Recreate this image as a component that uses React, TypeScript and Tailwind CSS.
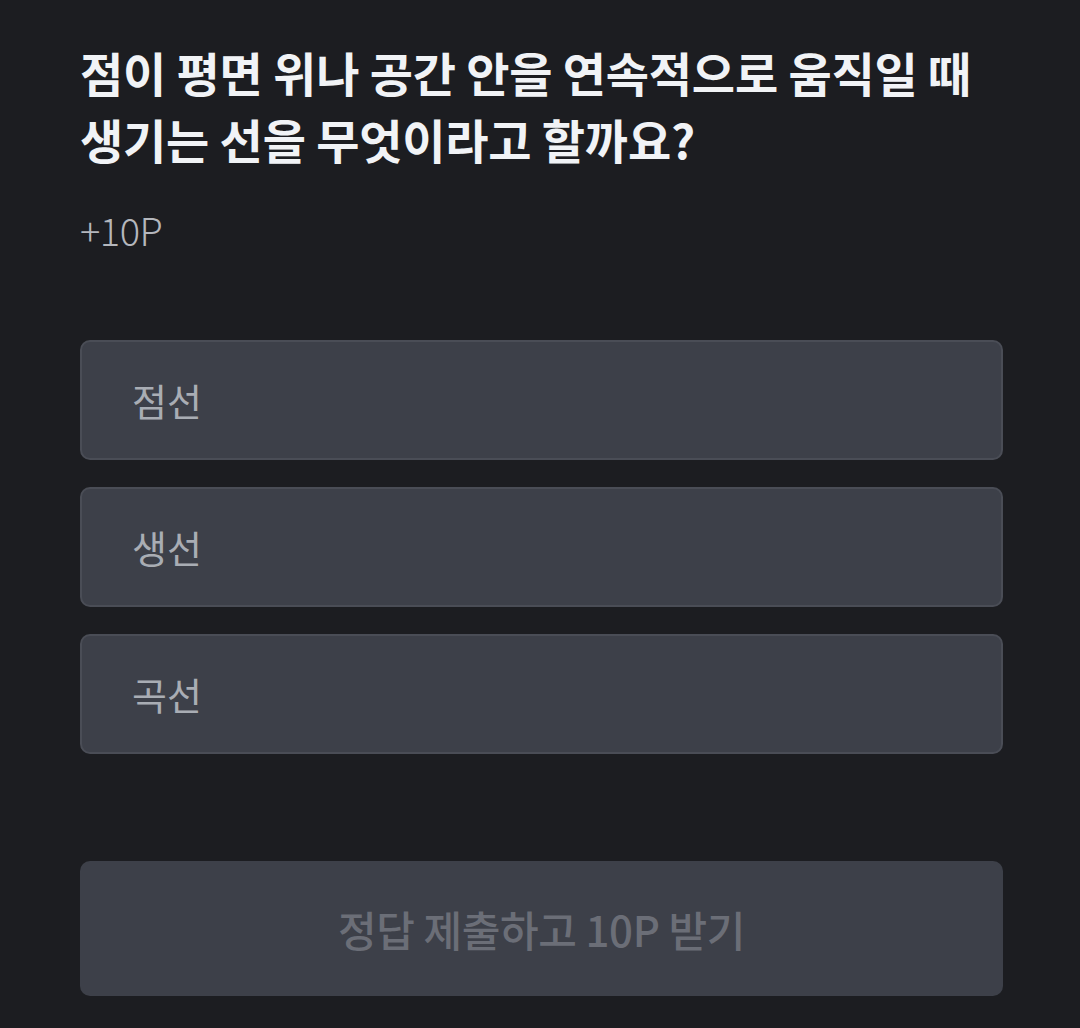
const OPTIONS = ['점선', '생선', '곡선']

export default function App() {
  return (
    <div
      className="min-h-[1028px] w-full bg-[#1c1d21] px-[80px] pt-[38px]"
      style={{ fontFamily: '"Noto Sans CJK KR", "Noto Sans", sans-serif' }}
    >
      <h1 className="text-[47px] font-bold leading-[67px] tracking-[-0.2px] text-[#f1f3f6]">
        점이 평면 위나 공간 안을 연속적으로 움직일 때<br />
        생기는 선을 무엇이라고 할까요?
      </h1>
      <p className="mt-[36px] text-[38px] font-light leading-[44px] tracking-[-0.5px] text-[#b4b7bd]">+10P</p>

      <div className="mt-[88px] flex flex-col gap-[27px]">
        {OPTIONS.map((o) => (
          <button
            key={o}
            className="flex h-[120px] w-[923px] items-center rounded-[10px] border-2 border-[#4a4d56] bg-[#3d4049] pl-[50px] text-left text-[38px] leading-none text-[#a9adb4]"
          >
            {o}
          </button>
        ))}
      </div>

      <button className="mt-[107px] flex h-[135px] w-[923px] items-center justify-center rounded-[10px] bg-[#3d4049] text-[42px] font-medium tracking-[-0.4px] text-[#6b6e77]">
        정답 제출하고 10P 받기
      </button>
    </div>
  )
}
